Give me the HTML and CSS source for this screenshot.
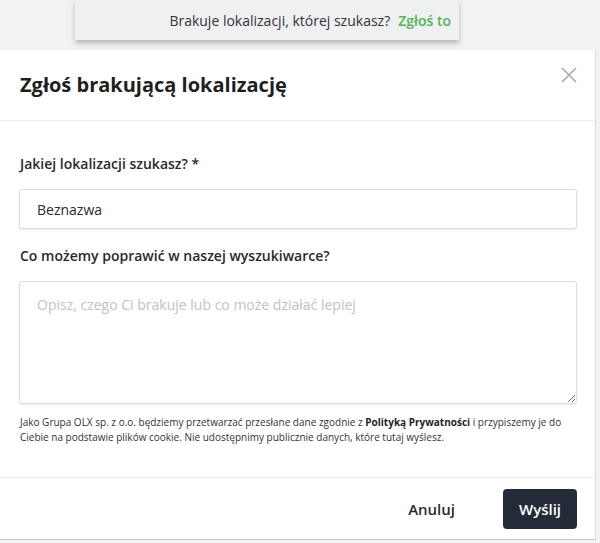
FILE: index.html
```html
<!DOCTYPE html>
<html lang="pl">
<head>
    <meta charset="UTF-8">
    <meta name="viewport" content="width=device-width, initial-scale=1.0">
    <title>Zgłoś brakującą lokalizację</title>
    <link rel="stylesheet" href="styles.css">
</head>
<body>
    <div class="hint-wrap">
        <div class="hint">
            Brakuje lokalizacji, której szukasz? <a href="#" class="hint-link">Zgłoś to</a>
        </div>
    </div>
    <div class="modal">
        <div class="modal-header">
            <h2 class="modal-title">Zgłoś brakującą lokalizację</h2>
            <button class="close" aria-label="Zamknij">
                <svg width="16" height="16" viewBox="0 0 16 16">
                    <path d="M1 1L15 15M15 1L1 15" stroke="#a8a8a8" stroke-width="1.6" fill="none"/>
                </svg>
            </button>
        </div>
        <div class="modal-body">
            <label class="label" for="location">Jakiej lokalizacji szukasz? *</label>
            <input type="text" class="field" id="location" value="Beznazwa">
            <label class="label" for="comment">Co możemy poprawić w naszej wyszukiwarce?</label>
            <textarea class="field area" id="comment" placeholder="Opisz, czego Ci brakuje lub co może działać lepiej"></textarea>
            <p class="legal">Jako Grupa OLX sp. z o.o. będziemy przetwarzać przesłane dane zgodnie z <b>Polityką Prywatności</b> i przypiszemy je do Ciebie na podstawie plików cookie. Nie udostępnimy publicznie danych, które tutaj wyślesz.</p>
        </div>
        <div class="modal-footer">
            <button class="btn btn-ghost">Anuluj</button>
            <button class="btn btn-dark">Wyślij</button>
        </div>
    </div>
</body>
</html>
```

FILE: styles.css
```css
* {
    box-sizing: border-box;
}
body {
    margin: 0;
    height: 543px;
    overflow: hidden;
    background-color: #f2f2f2;
    font-family: 'Open Sans', sans-serif;
    color: #2a2a2a;
}
.hint-wrap {
    height: 50px;
    padding-left: 75px;
}
.hint {
    width: 384px;
    height: 40px;
    padding-right: 8px;
    display: flex;
    align-items: center;
    justify-content: flex-end;
    gap: 4px;
    background: #eff0f1;
    box-shadow: 0 3px 5px rgba(0, 0, 0, 0.25);
    font-size: 14px;
    color: #333;
}
.hint-link {
    color: #4fb54f;
    font-weight: 600;
    text-decoration: none;
    margin-left: 4px;
}
.modal {
    width: 596px;
    height: 490px;
    background: #fff;
    border-right: 1px solid #dcdcdc;
    border-bottom: 1px solid #c8c8c8;
    display: flex;
    flex-direction: column;
}
.modal-header {
    height: 71px;
    flex-shrink: 0;
    display: flex;
    align-items: center;
    justify-content: space-between;
    padding: 0 18px 2px 20px;
    border-bottom: 1px solid #ececec;
}
.modal-title {
    margin: 0;
    font-size: 20px;
    font-weight: 700;
    color: #1f1f1f;
}
.close {
    border: none;
    background: none;
    padding: 0;
    margin-top: -16px;
    cursor: pointer;
}
.modal-body {
    flex: 1;
    padding: 33px 18px 0 19px;
}
.label {
    display: block;
    font-size: 14px;
    line-height: 19px;
    font-weight: 600;
    color: #2a2a2a;
    margin: 0 0 16px 1px;
}
.field {
    display: block;
    width: 100%;
    height: 40px;
    padding: 0 17px;
    font-family: inherit;
    font-size: 14px;
    color: #2a2a2a;
    border: 1px solid #dedede;
    border-radius: 3px;
    box-shadow: 0 1px 2px rgba(0, 0, 0, 0.08);
    margin-bottom: 17px;
}
.area {
    height: 123px;
    padding: 13px 17px;
    line-height: 19px;
    margin-bottom: 11px;
    resize: vertical;
}
.area::placeholder {
    color: #c2c2c2;
}
.legal {
    margin: 0 0 0 1px;
    font-size: 10px;
    line-height: 15px;
    color: #333;
}
.legal b {
    font-weight: 700;
    color: #1f1f1f;
}
.modal-footer {
    height: 62px;
    flex-shrink: 0;
    display: flex;
    align-items: center;
    justify-content: flex-end;
    gap: 16px;
    padding: 0 18px;
    border-top: 1px solid #ececec;
}
.btn {
    font-family: inherit;
    font-size: 15px;
    font-weight: 600;
    height: 40px;
    border: none;
    border-radius: 4px;
    cursor: pointer;
}
.btn-ghost {
    background: none;
    color: #2a2a2a;
    padding: 0 32px;
}
.btn-dark {
    background: #232b39;
    color: #fff;
    width: 74px;
}
```
